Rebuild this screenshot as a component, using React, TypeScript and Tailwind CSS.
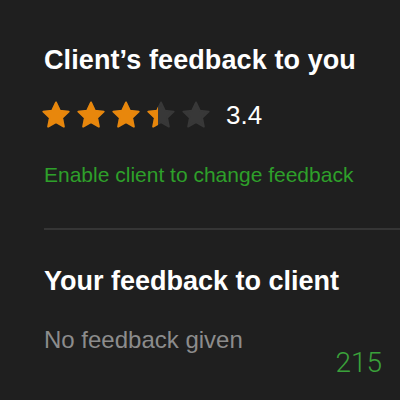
import React from 'react';

const STAR_PATH =
  'M12 2.6l2.9 6.1 6.6.8-4.9 4.6 1.3 6.6L12 17.4l-5.9 3.3 1.3-6.6-4.9-4.6 6.6-.8z';

// A single star; `fill` is 0..1 for how much of it is coloured
const Star: React.FC<{ fill: number }> = ({ fill }) => (
  <div className="relative w-[32px] h-[32px]">
    <svg viewBox="0 0 24 24" className="w-[32px] h-[32px]">
      <path d={STAR_PATH} fill="#383838" stroke="#383838" strokeWidth="1.4" strokeLinejoin="round" />
    </svg>
    {fill > 0 && (
      <div className="absolute inset-y-0 left-0 overflow-hidden" style={{ width: `${fill * 100}%` }}>
        <svg viewBox="0 0 24 24" className="w-[32px] h-[32px] max-w-none">
          <path d={STAR_PATH} fill="#e8870c" stroke="#e8870c" strokeWidth="1.4" strokeLinejoin="round" />
        </svg>
      </div>
    )}
  </div>
);

const Rating: React.FC<{ value: number }> = ({ value }) => (
  <div className="flex items-center">
    <div className="flex items-center gap-[3px]">
      {[0, 1, 2, 3, 4].map(i => (
        <Star key={i} fill={Math.max(0, Math.min(1, value - i))} />
      ))}
    </div>
    <span className="ml-[14px] text-[26px] leading-none text-white">{value.toFixed(1)}</span>
  </div>
);

export default function App() {
  return (
    <div className="w-[400px] h-[400px] bg-[#1f1f1f] overflow-hidden font-['Liberation_Sans',Arial,sans-serif]">
      <div className="pl-[44px] pt-[44px]">
        <h2 className="text-[27px] leading-[32px] font-bold text-white tracking-[0.1px]">
          Client’s feedback to you
        </h2>
        <div className="mt-[23px] -ml-[4px]">
          <Rating value={3.4} />
        </div>
        <p className="mt-[32px] text-[21px] leading-[24px] text-[#2ea02a]">
          Enable client to change feedback
        </p>
      </div>

      <div className="mt-[41px] ml-[44px] h-[2px] bg-[#353535]" />

      <div className="pl-[44px] pt-[35px] pr-[18px]">
        <h2 className="text-[27px] leading-[32px] font-bold text-white">
          Your feedback to client
        </h2>
        <p className="mt-[29px] text-[24px] leading-[28px] text-[#8c8c8c]">No feedback given</p>
        <div className="flex justify-end -mt-[7px]">
          <span className="font-['Roboto',sans-serif] font-light text-[28px] leading-[32px] text-[#3aa13a]">
            215
          </span>
        </div>
      </div>
    </div>
  );
}
